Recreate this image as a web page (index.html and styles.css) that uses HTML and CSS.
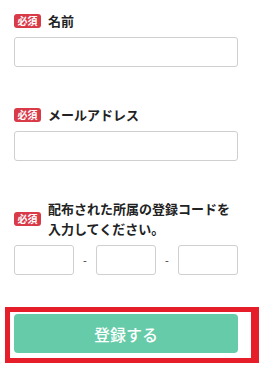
FILE: index.html
```html
<!DOCTYPE html>
<html lang="ja">
<head>
    <meta charset="UTF-8">
    <meta name="viewport" content="width=device-width, initial-scale=1.0">
    <title>登録</title>
    <link rel="stylesheet" href="styles.css">
</head>
<body>
    <form class="form">
        <div class="field">
            <div class="label-row">
                <span class="badge">必須</span>
                <span class="label">名前</span>
            </div>
            <input class="text-input" type="text">
        </div>
        <div class="field">
            <div class="label-row">
                <span class="badge">必須</span>
                <span class="label">メールアドレス</span>
            </div>
            <input class="text-input" type="email">
        </div>
        <div class="field">
            <div class="label-row">
                <span class="badge">必須</span>
                <span class="label">配布された所属の登録コードを<br>入力してください。</span>
            </div>
            <div class="code-row">
                <input class="text-input code" type="text">
                <span class="dash">-</span>
                <input class="text-input code" type="text">
                <span class="dash">-</span>
                <input class="text-input code" type="text">
            </div>
        </div>
        <div class="highlight">
            <button class="submit" type="button">登録する</button>
        </div>
    </form>
</body>
</html>
```

FILE: styles.css
```css
body {
    margin: 0;
    padding: 11px 28px 0 14px;
    font-family: 'Noto Sans CJK JP', 'Noto Sans', sans-serif;
    color: #222;
    background: #fff;
}
.form {
    width: 224px;
}
.field {
    margin-bottom: 38px;
}
.field:nth-child(3) {
    margin-bottom: 32px;
}
.label-row {
    display: flex;
    align-items: center;
    margin-bottom: 6px;
}
.badge {
    flex: none;
    width: 27px;
    height: 14px;
    line-height: 14px;
    background: #d93a48;
    color: #fff;
    font-size: 10px;
    font-weight: bold;
    text-align: center;
    border-radius: 3px;
    margin-right: 7px;
}
.label {
    font-size: 13px;
    font-weight: bold;
    line-height: 20px;
}
.text-input {
    display: block;
    box-sizing: border-box;
    width: 100%;
    height: 30px;
    border: 1px solid #cfcfcf;
    border-radius: 3px;
    background: #fff;
    margin: 0;
}
.code-row {
    display: flex;
    align-items: center;
}
.code {
    width: 60px;
    flex: none;
}
.dash {
    width: 22px;
    text-align: center;
    font-size: 11px;
    color: #333;
}
.highlight {
    margin-left: -9px;
    width: 233px;
    border: 5px solid #e61e2a;
    border-right-width: 8px;
    padding: 2px 4px 5px 4px;
}
.submit {
    display: block;
    width: 224px;
    height: 39px;
    border: none;
    border-radius: 4px;
    background: #66cba8;
    color: #fff;
    font-family: inherit;
    font-size: 16px;
    font-weight: 500;
}
```
